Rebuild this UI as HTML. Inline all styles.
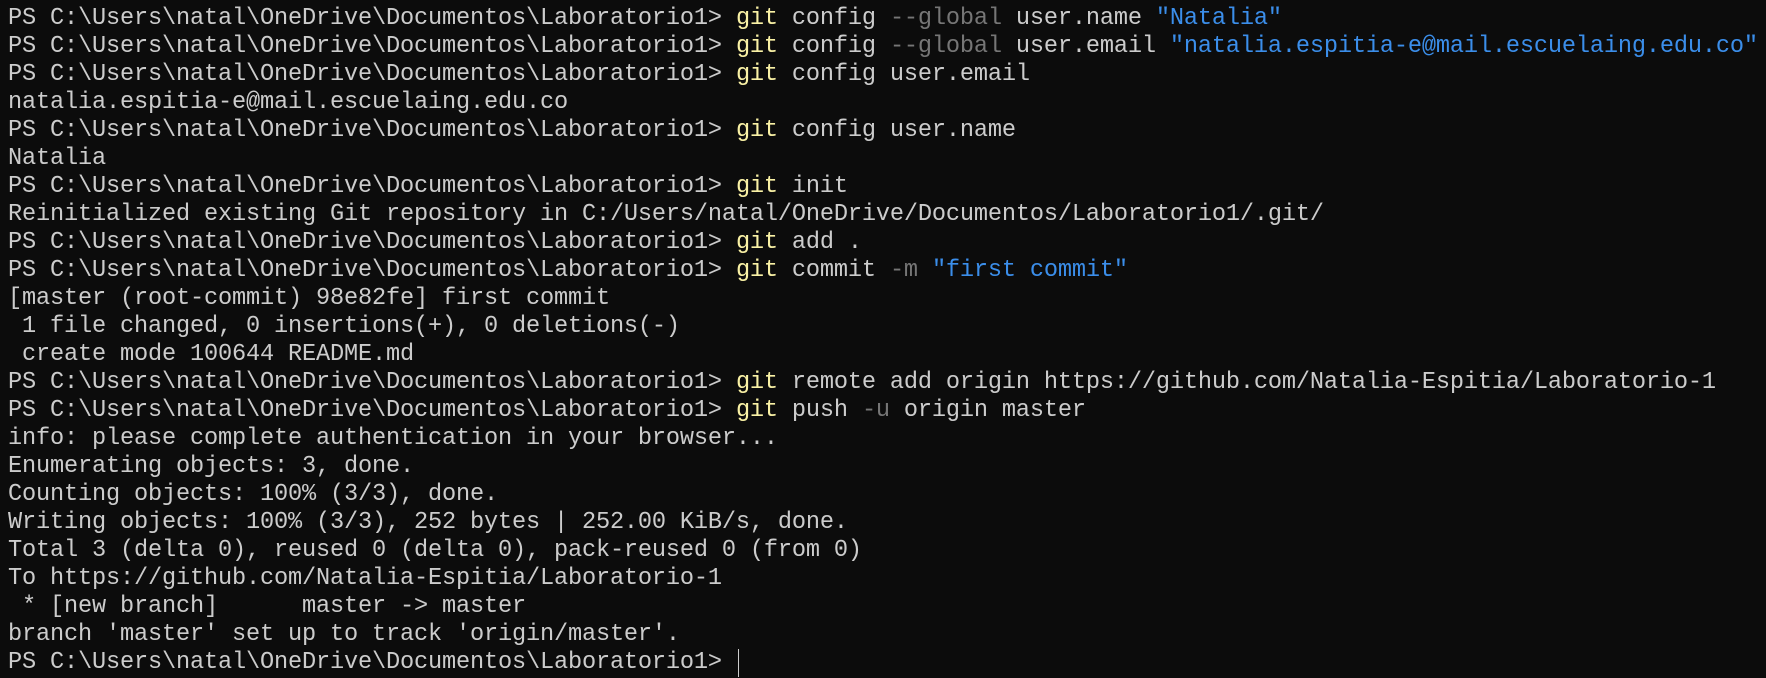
<!DOCTYPE html>
<html><head><meta charset="utf-8"><style>
html,body{margin:0;padding:0;background:#0c0c0c;width:1766px;height:678px;overflow:hidden}
pre{margin:0;padding:5px 0 0 8px;font-family:"Liberation Mono",monospace;font-size:23.6px;line-height:28px;color:#cccccc;white-space:pre;letter-spacing:-0.16px}
.y{color:#f9f1a5}.g{color:#767676}.b{color:#3b8eea}
.c{display:inline-block;width:1.5px;height:28px;background:#ccc;vertical-align:top;margin-left:2px}
</style></head><body><pre>PS C:\Users\natal\OneDrive\Documentos\Laboratorio1&gt; <span class="y">git</span> config <span class="g">--global</span> user.name <span class="b">"Natalia"</span>
PS C:\Users\natal\OneDrive\Documentos\Laboratorio1&gt; <span class="y">git</span> config <span class="g">--global</span> user.email <span class="b">"natalia.espitia-e@mail.escuelaing.edu.co"</span>
PS C:\Users\natal\OneDrive\Documentos\Laboratorio1&gt; <span class="y">git</span> config user.email
natalia.espitia-e@mail.escuelaing.edu.co
PS C:\Users\natal\OneDrive\Documentos\Laboratorio1&gt; <span class="y">git</span> config user.name
Natalia
PS C:\Users\natal\OneDrive\Documentos\Laboratorio1&gt; <span class="y">git</span> init
Reinitialized existing Git repository in C:/Users/natal/OneDrive/Documentos/Laboratorio1/.git/
PS C:\Users\natal\OneDrive\Documentos\Laboratorio1&gt; <span class="y">git</span> add .
PS C:\Users\natal\OneDrive\Documentos\Laboratorio1&gt; <span class="y">git</span> commit <span class="g">-m</span> <span class="b">"first commit"</span>
[master (root-commit) 98e82fe] first commit
 1 file changed, 0 insertions(+), 0 deletions(-)
 create mode 100644 README.md
PS C:\Users\natal\OneDrive\Documentos\Laboratorio1&gt; <span class="y">git</span> remote add origin https://github.com/Natalia-Espitia/Laboratorio-1
PS C:\Users\natal\OneDrive\Documentos\Laboratorio1&gt; <span class="y">git</span> push <span class="g">-u</span> origin master
info: please complete authentication in your browser...
Enumerating objects: 3, done.
Counting objects: 100% (3/3), done.
Writing objects: 100% (3/3), 252 bytes | 252.00 KiB/s, done.
Total 3 (delta 0), reused 0 (delta 0), pack-reused 0 (from 0)
To https://github.com/Natalia-Espitia/Laboratorio-1
 * [new branch]      master -&gt; master
branch 'master' set up to track 'origin/master'.
PS C:\Users\natal\OneDrive\Documentos\Laboratorio1&gt; <span class="c"></span></pre></body></html>
